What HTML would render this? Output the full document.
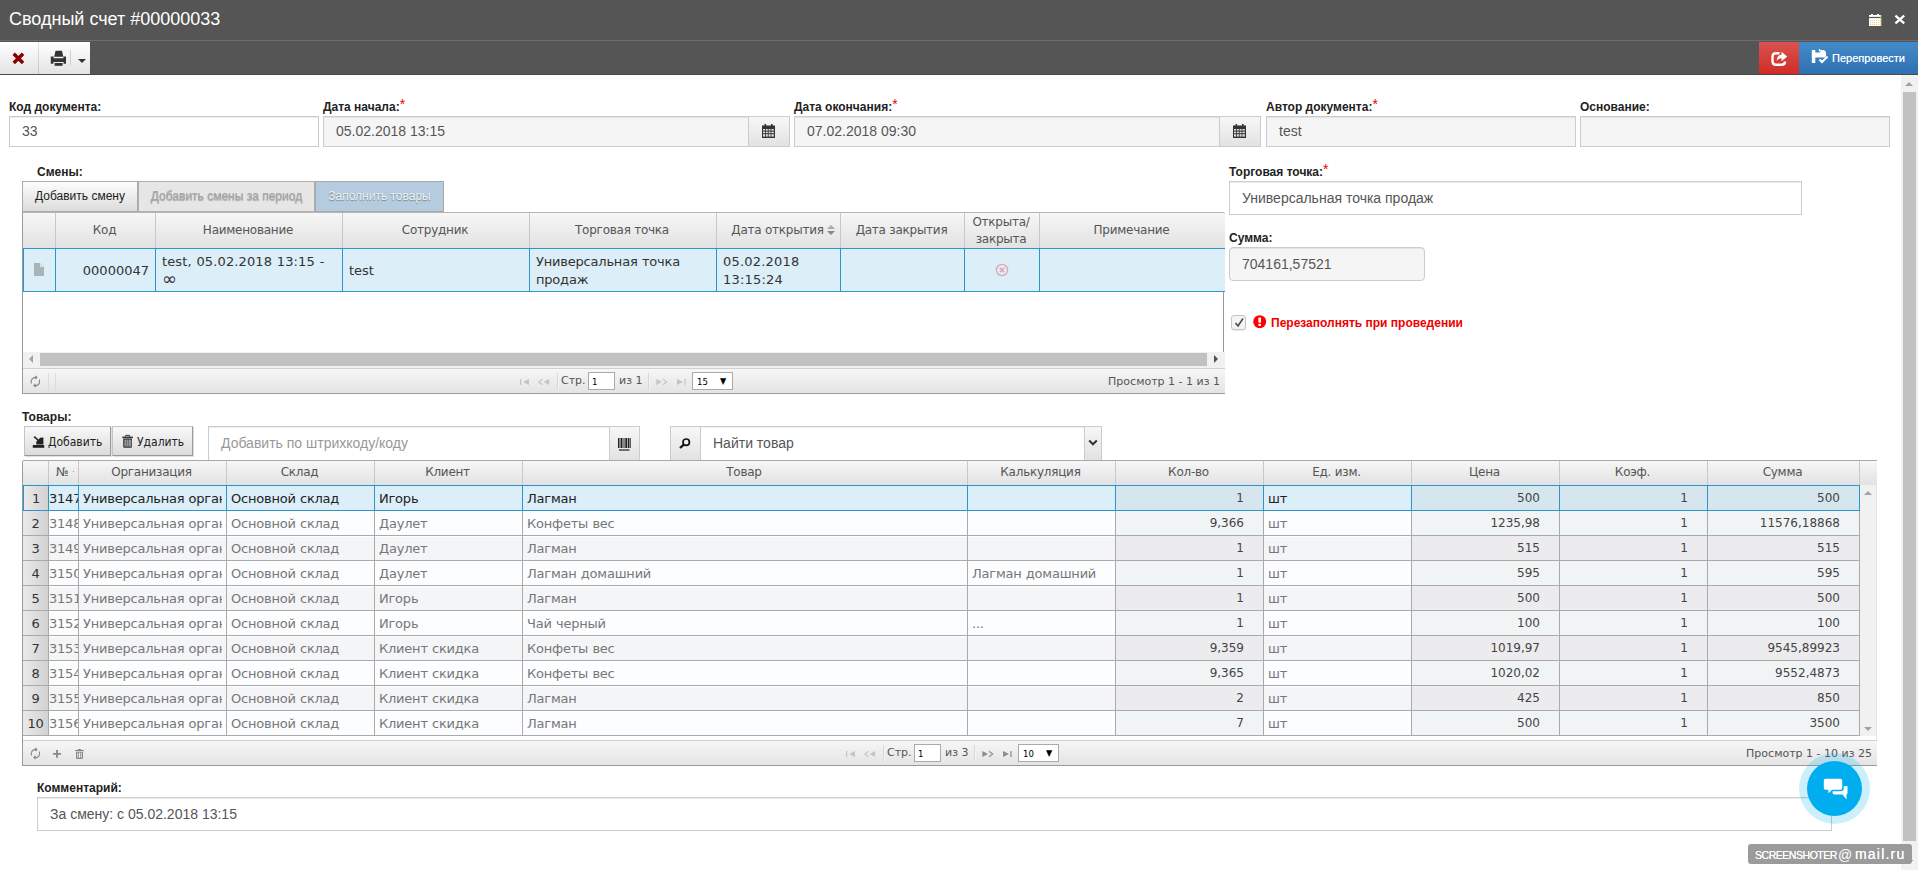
<!DOCTYPE html>
<html lang="ru">
<head>
<meta charset="utf-8">
<title>Сводный счет #00000033</title>
<style>
html,body{margin:0;padding:0;}
body{width:1918px;height:870px;overflow:hidden;background:#fff;position:relative;font-family:"Liberation Sans",Arial,sans-serif;font-size:12px;color:#222;}
.abs{position:absolute;box-sizing:border-box;}
#titlebar{left:0;top:0;width:1918px;height:40px;background:#555;}
#title{left:9px;top:8px;font-size:18px;line-height:22px;color:#fff;white-space:nowrap;}
#sep{left:0;top:40px;width:1918px;height:1px;background:#6b6b6b;}
#toolbar{left:0;top:41px;width:1918px;height:34px;background:#555;border-bottom:1px solid #4a4a4a;}
.tbtn{top:42px;height:32px;background:linear-gradient(#ffffff,#e3e3e3);}
.lbl{font-weight:bold;font-size:12px;line-height:14px;color:#222;white-space:nowrap;}
.req{color:#e00;font-weight:normal;font-size:14px;position:relative;top:-2.5px;line-height:0;}
.inp{border:1px solid #ccc;background:#fff;font-size:14px;color:#555;padding-left:12px;white-space:nowrap;overflow:hidden;box-shadow:inset 0 1px 1px rgba(0,0,0,.075);}
.inp.dis{background:#f5f5f5;}
.addon{border:1px solid #ccc;background:linear-gradient(#f7f7f7,#e2e2e2);}
.btn{border:1px solid #aaa;background:linear-gradient(#fdfdfd,#dcdcdc);font-size:12px;color:#222;text-align:center;white-space:nowrap;}
.ghdr{background:linear-gradient(#f7f7f7 0%,#ececec 50%,#e2e2e2 100%);border-top:1px solid #b5b5b5;}
.hc{font-family:"DejaVu Sans",Verdana,sans-serif;font-size:12px;letter-spacing:-0.25px;color:#555;text-align:center;padding-right:2px;white-space:nowrap;border-right:1px solid #c8c8c8;overflow:hidden;}
.pager{background:linear-gradient(#f6f6f6,#e4e4e4);border-top:1px solid #d0d0d0;border-bottom:1px solid #9a9a9a;}
.pg{font-family:"DejaVu Sans",Verdana,sans-serif;font-size:11px;color:#555;white-space:nowrap;line-height:14px;}
.pinp{border:1px solid #aaa;background:#fff;font-family:"DejaVu Sans Condensed","DejaVu Sans",sans-serif;font-stretch:condensed;font-size:9.5px;color:#000;line-height:17px;padding-left:3px;}
.c1{font-family:"DejaVu Sans",Verdana,sans-serif;font-size:13px;letter-spacing:0;word-spacing:0.4px;color:#333;border-right:1px solid #2b96cc;line-height:18px;overflow:hidden;}
.b3{font-family:"DejaVu Sans Condensed","DejaVu Sans",sans-serif;font-stretch:condensed;font-size:12px;line-height:30px;text-align:left;border-color:#c4c4c4 #999 #999 #c4c4c4;background:linear-gradient(#f8f8f8,#dcdcdc);box-shadow:1px 1px 0 rgba(0,0,0,.12);}
.tf{font-family:"DejaVu Sans Condensed","DejaVu Sans",sans-serif;font-stretch:condensed;}
.c2{font-family:"DejaVu Sans",Verdana,sans-serif;font-size:13px;letter-spacing:-0.22px;word-spacing:0.4px;color:#777;border-right:1px solid #aaa;line-height:26px;overflow:hidden;white-space:nowrap;height:24px;}
</style>
</head>
<body>
<div id="titlebar" class="abs"></div>
<div id="title" class="abs">Сводный счет #00000033</div>
<div id="sep" class="abs"></div>
<div id="toolbar" class="abs"></div>

<div class="abs tbtn" style="left:0;width:90px;"></div>
<div class="abs" style="left:38px;top:42px;width:1px;height:32px;background:linear-gradient(#e4e4e4,#c4c4c4);"></div>
<svg class="abs" style="left:10px;top:50px;" width="18" height="18" viewBox="10 50 18 18"><path d="M13.7 53.8 L23.1 63 M23.1 53.8 L13.7 63" stroke="#8b0000" stroke-width="3.5" fill="none"/></svg>
<svg class="abs" style="left:50px;top:50px;" width="17" height="17" viewBox="50 50 17 17"><g fill="#333">
<path d="M55.5 50.7 H62 L63.3 56.7 H54.2Z"/>
<path d="M50.8 56.4 H53.7 V58.2 H63.4 V56.4 H66 V63.7 H63.6 V62 H53.4 V63.7 H50.8Z"/>
<path d="M54.6 63 H62.6 V65.8 H54.6Z"/></g></svg>
<div class="abs" style="left:70px;top:50px;width:1px;height:15px;background:#cfcfcf;"></div>
<div class="abs" style="left:78px;top:59px;width:0;height:0;border-left:4px solid transparent;border-right:4px solid transparent;border-top:4px solid #333;"></div>

<svg class="abs" style="left:1866px;top:12px;" width="18" height="16" viewBox="1866 12 18 16">
<g fill="#fff"><rect x="1869" y="15" width="12.2" height="1.9"/><rect x="1871" y="14" width="2" height="1.2"/><rect x="1877" y="14" width="2" height="1.2"/><rect x="1869" y="18.1" width="12.2" height="7.9"/></g>
<g fill="#e9bf4f"><rect x="1870.2" y="20.1" width="0.9" height="0.9"/><rect x="1872.2" y="20.1" width="0.9" height="0.9"/><rect x="1874.2" y="20.1" width="0.9" height="0.9"/><rect x="1876.2" y="20.1" width="0.9" height="0.9"/><rect x="1878.2" y="20.1" width="0.9" height="0.9"/>
<rect x="1870.2" y="22.1" width="0.9" height="0.9"/><rect x="1872.2" y="22.1" width="0.9" height="0.9"/><rect x="1874.2" y="22.1" width="0.9" height="0.9"/><rect x="1876.2" y="22.1" width="0.9" height="0.9"/><rect x="1878.2" y="22.1" width="0.9" height="0.9"/>
<rect x="1870.2" y="24.1" width="0.9" height="0.9"/><rect x="1872.2" y="24.1" width="0.9" height="0.9"/><rect x="1874.2" y="24.1" width="0.9" height="0.9"/><rect x="1876.2" y="24.1" width="0.9" height="0.9"/><rect x="1878.2" y="24.1" width="0.9" height="0.9"/>
<rect x="1880.4" y="15" width="0.8" height="11" opacity="0.8"/></g>
</svg>
<svg class="abs" style="left:1892px;top:12px;" width="16" height="16" viewBox="1892 12 16 16"><path d="M1895.4 15.6 L1904.2 23.4 M1904.2 15.6 L1895.4 23.4" stroke="#fff" stroke-width="2.3" fill="none"/></svg>

<div class="abs" style="left:1759px;top:42px;width:40px;height:32px;background:linear-gradient(#d9534f,#d02c28);"></div>
<svg class="abs" style="left:1771px;top:51px;" width="17" height="16" viewBox="0 0 17 16">
<path d="M8.5 2.2 H5 Q1.5 2.2 1.5 5.7 V10.3 Q1.5 13.8 5 13.8 H10.5 Q14 13.8 14 10.5" stroke="#fff" stroke-width="2.4" fill="none"/>
<path d="M10.5 0.8 L16.2 5.5 L10.5 10.2 V7.3 Q7.5 7.3 5.8 9.8 Q6 4.2 10.5 3.7 Z" fill="#fff"/>
</svg>
<div class="abs" style="left:1799px;top:42px;width:119px;height:32px;background:linear-gradient(#428bca,#3071b0);"></div>
<svg class="abs" style="left:1811px;top:48px;" width="18" height="17" viewBox="0 0 18 17">
<path d="M0.8 2 H4.3 V4.5 H9.2 V2 H13 L15 4 V8 L13.5 9.5 H4.3 V15 H0.8 Z" fill="#fff"/>
<rect x="7.8" y="1" width="1.4" height="2.5" fill="#fff"/>
<path d="M8.5 11.5 L11 14 L16.5 8.5" stroke="#fff" stroke-width="2.2" fill="none"/>
</svg>
<div class="abs" style="left:1832px;top:51px;font-size:11px;line-height:14px;color:#fff;white-space:nowrap;text-shadow:0 0 0.5px rgba(255,255,255,.8);">Перепровести</div>

<div class="abs lbl" style="left:9px;top:100px;">Код документа:</div>
<div class="abs inp" style="left:9px;top:116px;width:310px;height:31px;line-height:29px;">33</div>
<div class="abs lbl" style="left:323px;top:100px;">Дата начала:<span class="req">*</span></div>
<div class="abs inp dis" style="left:323px;top:116px;width:426px;height:31px;line-height:29px;">05.02.2018 13:15</div>
<div class="abs addon" style="left:748px;top:116px;width:42px;height:31px;"></div>
<div class="abs lbl" style="left:794px;top:100px;">Дата окончания:<span class="req">*</span></div>
<div class="abs inp dis" style="left:794px;top:116px;width:426px;height:31px;line-height:29px;">07.02.2018 09:30</div>
<div class="abs addon" style="left:1219px;top:116px;width:42px;height:31px;"></div>
<div class="abs lbl" style="left:1266px;top:100px;">Автор документа:<span class="req">*</span></div>
<div class="abs inp dis" style="left:1266px;top:116px;width:310px;height:31px;line-height:29px;">test</div>
<div class="abs lbl" style="left:1580px;top:100px;">Основание:</div>
<div class="abs inp dis" style="left:1580px;top:116px;width:310px;height:31px;line-height:29px;"></div>
<svg class="abs" style="left:762px;top:124px;" width="13" height="14" viewBox="0 0 13 14">
<rect x="0" y="1.5" width="13" height="12.5" fill="#333"/><rect x="2.5" y="0" width="1.6" height="3" fill="#333"/><rect x="9" y="0" width="1.6" height="3" fill="#333"/>
<g fill="#ddd"><rect x="1" y="5" width="2" height="1.6"/><rect x="3.8" y="5" width="2" height="1.6"/><rect x="6.6" y="5" width="2" height="1.6"/><rect x="9.4" y="5" width="2.4" height="1.6"/>
<rect x="1" y="7.6" width="2" height="1.6"/><rect x="3.8" y="7.6" width="2" height="1.6"/><rect x="6.6" y="7.6" width="2" height="1.6"/><rect x="9.4" y="7.6" width="2.4" height="1.6"/>
<rect x="1" y="10.2" width="2" height="2.4"/><rect x="3.8" y="10.2" width="2" height="2.4"/><rect x="6.6" y="10.2" width="2" height="2.4"/><rect x="9.4" y="10.2" width="2.4" height="2.4"/></g>
</svg>
<svg class="abs" style="left:1233px;top:124px;" width="13" height="14" viewBox="0 0 13 14">
<rect x="0" y="1.5" width="13" height="12.5" fill="#333"/><rect x="2.5" y="0" width="1.6" height="3" fill="#333"/><rect x="9" y="0" width="1.6" height="3" fill="#333"/>
<g fill="#ddd"><rect x="1" y="5" width="2" height="1.6"/><rect x="3.8" y="5" width="2" height="1.6"/><rect x="6.6" y="5" width="2" height="1.6"/><rect x="9.4" y="5" width="2.4" height="1.6"/>
<rect x="1" y="7.6" width="2" height="1.6"/><rect x="3.8" y="7.6" width="2" height="1.6"/><rect x="6.6" y="7.6" width="2" height="1.6"/><rect x="9.4" y="7.6" width="2.4" height="1.6"/>
<rect x="1" y="10.2" width="2" height="2.4"/><rect x="3.8" y="10.2" width="2" height="2.4"/><rect x="6.6" y="10.2" width="2" height="2.4"/><rect x="9.4" y="10.2" width="2.4" height="2.4"/></g>
</svg>
<div class="abs lbl" style="left:37px;top:165px;">Смены:</div>
<div class="abs btn" style="left:22px;top:181px;width:116px;height:31px;line-height:29px;">Добавить смену</div>
<div class="abs btn" style="left:138px;top:181px;width:177px;height:31px;line-height:29px;background:#e6e6e6;color:#a6a6a6;border-color:#b0b0b0;text-shadow:0 1px 1px #a0a0a0;">Добавить смены за период</div>
<div class="abs btn" style="left:315px;top:181px;width:129px;height:31px;line-height:29px;background:#b5cbe0;color:#f0f1f2;border-color:#a8a8a8;text-shadow:0 1px 1px #75828f;">Заполнить товары</div>
<div class="abs" style="left:22px;top:212px;width:1px;height:182px;background:#9a9a9a;"></div>
<div class="abs" style="left:1223px;top:292px;width:1px;height:60px;background:#9a9a9a;"></div>
<div class="abs ghdr" style="left:23px;top:212px;width:1202px;height:36px;border-radius:0 2px 0 0;"></div>
<div class="abs hc" style="left:23px;top:213px;width:33px;height:35px;line-height:35px;"></div>
<div class="abs hc" style="left:56px;top:213px;width:100px;height:35px;line-height:35px;">Код</div>
<div class="abs hc" style="left:156px;top:213px;width:187px;height:35px;line-height:35px;">Наименование</div>
<div class="abs hc" style="left:343px;top:213px;width:187px;height:35px;line-height:35px;">Сотрудник</div>
<div class="abs hc" style="left:530px;top:213px;width:187px;height:35px;line-height:35px;">Торговая точка</div>
<div class="abs hc" style="left:717px;top:213px;width:124px;height:35px;line-height:35px;padding-right:2px;">Дата открытия</div>
<div class="abs hc" style="left:841px;top:213px;width:124px;height:35px;line-height:35px;">Дата закрытия</div>
<div class="abs hc" style="left:965px;top:213px;width:75px;height:35px;line-height:17px;padding-top:1px;">Открыта/<br>закрыта</div>
<div class="abs hc" style="left:1040px;top:213px;width:185px;height:35px;line-height:35px;border-right:none;">Примечание</div>
<div class="abs" style="left:827px;top:225px;width:0;height:0;border-left:4px solid transparent;border-right:4px solid transparent;border-bottom:4px solid #aaa;"></div>
<div class="abs" style="left:827px;top:231px;width:0;height:0;border-left:4px solid transparent;border-right:4px solid transparent;border-top:4px solid #888;"></div>
<div class="abs" style="left:23px;top:248px;width:1202px;height:44px;background:#dceef8;border-top:1px solid #2b96cc;border-bottom:1px solid #2b96cc;border-left:1px solid #2b96cc;"></div>
<div class="abs c1" style="left:23px;top:249px;width:33px;height:42px;"></div>
<div class="abs c1" style="left:56px;top:249px;width:100px;height:42px;"><div style="text-align:right;padding-right:6px;line-height:44px;">00000047</div></div>
<div class="abs c1" style="left:156px;top:249px;width:187px;height:42px;"><div style="padding:4px 6px 0;letter-spacing:0.12px;word-spacing:0.5px;">test, 05.02.2018 13:15 -<br><span style="font-size:18px;line-height:14px;position:relative;top:1px;">∞</span></div></div>
<div class="abs c1" style="left:343px;top:249px;width:187px;height:42px;"><div style="padding-left:6px;line-height:44px;">test</div></div>
<div class="abs c1" style="left:530px;top:249px;width:187px;height:42px;"><div style="padding:4px 6px 0;letter-spacing:-0.2px;">Универсальная точка<br>продаж</div></div>
<div class="abs c1" style="left:717px;top:249px;width:124px;height:42px;"><div style="padding:4px 6px 0;letter-spacing:0.2px;">05.02.2018<br>13:15:24</div></div>
<div class="abs c1" style="left:841px;top:249px;width:124px;height:42px;"></div>
<div class="abs c1" style="left:965px;top:249px;width:75px;height:42px;"></div>
<div class="abs c1" style="left:1040px;top:249px;width:185px;height:42px;border-right:none;"></div>
<svg class="abs" style="left:34px;top:263px;" width="10" height="13" viewBox="0 0 10 13"><path d="M0 0 H6 L10 4 V13 H0Z" fill="#a9b4b8"/><path d="M6 0 V4 H10Z" fill="#d6e2e8"/></svg>
<svg class="abs" style="left:995px;top:263px;" width="14" height="14" viewBox="0 0 14 14"><circle cx="7" cy="7" r="5.6" fill="none" stroke="#e0a3ab" stroke-width="1.3"/><path d="M4.8 4.8 L9.2 9.2 M9.2 4.8 L4.8 9.2" stroke="#e0a3ab" stroke-width="1.5"/></svg>
<div class="abs" style="left:23px;top:352px;width:1202px;height:16px;background:#f1f1f1;"></div>
<div class="abs" style="left:40px;top:353px;width:1167px;height:13px;background:#c1c1c1;"></div>
<div class="abs" style="left:29px;top:355px;width:0;height:0;border-top:4px solid transparent;border-bottom:4px solid transparent;border-right:4px solid #a3a3a3;"></div>
<div class="abs" style="left:1214px;top:355px;width:0;height:0;border-top:4px solid transparent;border-bottom:4px solid transparent;border-left:4px solid #505050;"></div>
<div class="abs pager" style="left:23px;top:368px;width:1202px;height:26px;"></div>
<svg class="abs" style="left:30px;top:375px;" width="12" height="13" viewBox="0 0 12 13"><g fill="none" stroke="#888" stroke-width="1.1"><path d="M1.6 8.6 A4.3 4.3 0 0 1 4.2 2.6 H6.6"/><path d="M5.2 1 L6.9 2.6 L5.2 4.2"/><path d="M9.2 4.6 A4.3 4.3 0 0 1 6.6 10.6 H4.2"/><path d="M5.6 9 L3.9 10.6 L5.6 12.2"/></g></svg>
<svg class="abs" style="left:520px;top:378px;" width="30" height="8" viewBox="0 0 30 8"><rect x="0" y="1" width="1.2" height="6" fill="#c4c4c4"/><path d="M9 1 V7 L3 4Z" fill="#c4c4c4"/><path d="M22.5 1.2 L18.8 4 L22.5 6.8" fill="none" stroke="#c4c4c4" stroke-width="1.1"/><path d="M29.2 1 V7 L23.6 4Z" fill="#c4c4c4"/></svg>
<div class="abs" style="left:557px;top:373px;width:2px;height:17px;background:#d8d8d8;border-right:1px solid #f4f4f4;"></div>
<div class="abs pg" style="left:561px;top:374px;">Стр.</div>
<div class="abs pinp" style="left:588px;top:372px;width:27px;height:18px;">1</div>
<div class="abs pg" style="left:619px;top:374px;">из 1</div>
<div class="abs" style="left:648px;top:373px;width:2px;height:17px;background:#d8d8d8;border-right:1px solid #f4f4f4;"></div>
<svg class="abs" style="left:656px;top:378px;" width="31" height="8" viewBox="0 0 31 8"><path d="M0.4 1 V7 L6 4Z" fill="#c4c4c4"/><path d="M7 1.2 L10.7 4 L7 6.8" fill="none" stroke="#c4c4c4" stroke-width="1.1"/><path d="M21 1 V7 L27 4Z" fill="#c4c4c4"/><rect x="28.4" y="1" width="1.2" height="6" fill="#c4c4c4"/></svg>
<div class="abs pinp" style="left:692px;top:372px;width:41px;height:18px;padding-left:4px;">15<span style="position:absolute;left:27px;top:0;font-size:9px;">▼</span></div>
<div class="abs pg" style="left:23px;top:375px;width:1197px;text-align:right;">Просмотр 1 - 1 из 1</div>
<div class="abs" style="left:48px;top:373px;width:1px;height:18px;background:#dcdcdc;"></div><div class="abs" style="left:55px;top:373px;width:1px;height:18px;background:#dcdcdc;"></div>
<div class="abs lbl" style="left:1229px;top:165px;">Торговая точка:<span class="req">*</span></div>
<div class="abs inp" style="left:1229px;top:181px;width:573px;height:34px;line-height:32px;">Универсальная точка продаж</div>
<div class="abs lbl" style="left:1229px;top:231px;">Сумма:</div>
<div class="abs inp dis" style="left:1229px;top:247px;width:196px;height:34px;line-height:32px;border-radius:4px;">704161,57521</div>
<div class="abs" style="left:1231px;top:315px;width:15px;height:15px;border:1px solid #c4c4c4;border-radius:3px;background:#f4f4f4;box-shadow:0 1px 1px rgba(0,0,0,.08);"></div>
<svg class="abs" style="left:1234px;top:317px;" width="11" height="11" viewBox="0 0 11 11"><path d="M1.5 6 L4 9 L9 1.5" fill="none" stroke="#444" stroke-width="1.5"/></svg>
<svg class="abs" style="left:1253px;top:315px;" width="14" height="14" viewBox="0 0 14 14"><circle cx="6.7" cy="6.7" r="6.5" fill="#f00"/><rect x="5.4" y="2.6" width="2.6" height="5.2" rx="0.6" fill="#fff"/><rect x="5.5" y="8.8" width="2.4" height="2.2" rx="0.5" fill="#fff"/></svg>
<div class="abs lbl" style="left:1271px;top:316px;color:#f00000;">Перезаполнять при проведении</div>
<div class="abs lbl" style="left:22px;top:410px;">Товары:</div>
<div class="abs btn b3" style="left:24px;top:426px;width:87px;height:30px;padding-left:23px;">Добавить</div>
<div class="abs btn b3" style="left:112px;top:426px;width:81px;height:30px;padding-left:24px;">Удалить</div>
<svg class="abs" style="left:32px;top:435px;" width="13" height="14" viewBox="32 435 13 14"><rect x="32.8" y="445" width="11.4" height="2.8" fill="#222"/><path d="M33.6 437.2 L34.8 436 L38.4 439.6 L40.2 437.8 L43.4 437.6 V444.6 H36.2 L36.4 441.6 L37.4 440.6Z" fill="#222"/></svg>
<svg class="abs" style="left:122px;top:434px;" width="12" height="15" viewBox="122 434 12 15"><path d="M125.6 436.6 V435.4 H129.6 V436.6" fill="none" stroke="#333" stroke-width="1"/><rect x="122.3" y="436.6" width="10.6" height="1.5" fill="#333"/><path d="M123.2 438.6 H132 V446.8 Q132 447.8 131 447.8 H124.2 Q123.2 447.8 123.2 446.8Z" fill="#333"/><g fill="#d4d4d4"><rect x="124.6" y="439.6" width="1" height="7"/><rect x="126.6" y="439.6" width="1" height="7"/><rect x="128.6" y="439.6" width="1" height="7"/><rect x="130.4" y="439.6" width="0.8" height="7"/></g></svg>
<div class="abs inp" style="left:208px;top:426px;width:402px;height:35px;line-height:33px;color:#999;font-family:"DejaVu Sans Condensed","DejaVu Sans",sans-serif;font-stretch:condensed;">Добавить по штрихкоду/коду</div>
<div class="abs addon" style="left:609px;top:426px;width:31px;height:35px;"></div>
<svg class="abs" style="left:618px;top:438px;" width="13" height="13" viewBox="0 0 13 13"><g fill="#222"><rect x="0" y="0" width="1.5" height="10"/><rect x="2.5" y="0" width="2" height="10"/><rect x="5.5" y="0" width="1" height="10"/><rect x="7.3" y="0" width="2" height="10"/><rect x="10" y="0" width="1" height="10"/><rect x="11.5" y="0" width="1.2" height="10"/><rect x="1" y="11.4" width="10.5" height="1.2"/></g></svg>
<div class="abs addon" style="left:670px;top:426px;width:31px;height:35px;"></div>
<svg class="abs" style="left:679px;top:438px;" width="12" height="11" viewBox="0 0 12 11"><circle cx="7.2" cy="4.2" r="3.2" fill="none" stroke="#111" stroke-width="1.7"/><path d="M4.8 6.6 L1 10" stroke="#111" stroke-width="2.2"/></svg>
<div class="abs inp" style="left:700px;top:426px;width:385px;height:35px;line-height:33px;font-family:"DejaVu Sans Condensed","DejaVu Sans",sans-serif;font-stretch:condensed;">Найти товар</div>
<div class="abs addon" style="left:1084px;top:426px;width:18px;height:35px;"></div>
<svg class="abs" style="left:1088px;top:439px;" width="10" height="8" viewBox="0 0 10 8"><path d="M1.2 1.5 L5 5.3 L8.8 1.5" fill="none" stroke="#333" stroke-width="2"/></svg>
<div class="abs ghdr" style="left:23px;top:460px;width:1854px;height:25px;border-top-color:#a8a8a8;"></div>
<div class="abs" style="left:22px;top:461px;width:1px;height:305px;background:#9a9a9a;"></div>
<div class="abs" style="left:1876px;top:485px;width:1px;height:255px;background:#e4e4e4;"></div>
<div class="abs hc" style="left:24px;top:461px;width:25px;height:24px;line-height:23px;"></div>
<div class="abs hc" style="left:49px;top:461px;width:30px;height:24px;line-height:23px;padding-right:3px;">№</div>
<div class="abs hc" style="left:79px;top:461px;width:148px;height:24px;line-height:23px;">Организация</div>
<div class="abs hc" style="left:227px;top:461px;width:148px;height:24px;line-height:23px;">Склад</div>
<div class="abs hc" style="left:375px;top:461px;width:148px;height:24px;line-height:23px;">Клиент</div>
<div class="abs hc" style="left:523px;top:461px;width:445px;height:24px;line-height:23px;">Товар</div>
<div class="abs hc" style="left:968px;top:461px;width:148px;height:24px;line-height:23px;">Калькуляция</div>
<div class="abs hc" style="left:1116px;top:461px;width:148px;height:24px;line-height:23px;">Кол-во</div>
<div class="abs hc" style="left:1264px;top:461px;width:148px;height:24px;line-height:23px;">Ед. изм.</div>
<div class="abs hc" style="left:1412px;top:461px;width:148px;height:24px;line-height:23px;">Цена</div>
<div class="abs hc" style="left:1560px;top:461px;width:148px;height:24px;line-height:23px;">Коэф.</div>
<div class="abs hc" style="left:1708px;top:461px;width:152px;height:24px;line-height:23px;">Сумма</div>
<div class="abs" style="left:73px;top:471px;width:1px;height:1px;background:#999;"></div>
<div class="abs" style="left:23px;top:485px;width:1837px;height:26px;background:#dceef8;border-top:1px solid #2b96cc;border-bottom:1px solid #2b96cc;"></div>
<div class="abs c2" style="left:24px;top:486px;width:25px;border-right-color:#2b96cc;color:#222;background:linear-gradient(90deg,#eaeaea,#d2d2d2);color:#333;text-align:center;border-left:1px solid #2b96cc;left:23px;width:26px;">1</div>
<div class="abs c2" style="left:49px;top:486px;width:30px;border-right-color:#2b96cc;color:#222;padding-left:0px;">3147</div>
<div class="abs c2" style="left:79px;top:486px;width:148px;border-right-color:#2b96cc;color:#222;padding-left:4px;padding-right:4px;"><div style="overflow:hidden;height:24px;">Универсальная организация</div></div>
<div class="abs c2" style="left:227px;top:486px;width:148px;border-right-color:#2b96cc;color:#222;padding-left:4px;padding-right:4px;"><div style="overflow:hidden;height:24px;">Основной склад</div></div>
<div class="abs c2" style="left:375px;top:486px;width:148px;border-right-color:#2b96cc;color:#222;padding-left:4px;padding-right:4px;"><div style="overflow:hidden;height:24px;">Игорь</div></div>
<div class="abs c2" style="left:523px;top:486px;width:445px;border-right-color:#2b96cc;color:#222;padding-left:4px;padding-right:4px;"><div style="overflow:hidden;height:24px;">Лагман</div></div>
<div class="abs c2" style="left:968px;top:486px;width:148px;border-right-color:#2b96cc;color:#222;padding-left:4px;padding-right:4px;"><div style="overflow:hidden;height:24px;"></div></div>
<div class="abs c2" style="left:1116px;top:486px;width:148px;border-right-color:#2b96cc;color:#222;background:#d6e6ee;color:#444;text-align:right;padding-right:19px;line-height:25px;font-size:12px;letter-spacing:0;">1</div>
<div class="abs c2" style="left:1264px;top:486px;width:148px;border-right-color:#2b96cc;color:#222;padding-left:4px;padding-right:4px;"><div style="overflow:hidden;height:24px;">шт</div></div>
<div class="abs c2" style="left:1412px;top:486px;width:148px;border-right-color:#2b96cc;color:#222;background:#d6e6ee;color:#444;text-align:right;padding-right:19px;line-height:25px;font-size:12px;letter-spacing:0;">500</div>
<div class="abs c2" style="left:1560px;top:486px;width:148px;border-right-color:#2b96cc;color:#222;background:#d6e6ee;color:#444;text-align:right;padding-right:19px;line-height:25px;font-size:12px;letter-spacing:0;">1</div>
<div class="abs c2" style="left:1708px;top:486px;width:152px;border-right-color:#2b96cc;color:#222;background:#d6e6ee;color:#444;text-align:right;padding-right:19px;line-height:25px;font-size:12px;letter-spacing:0;">500</div>
<div class="abs" style="left:23px;top:511px;width:1837px;height:25px;background:#fbfdfe;border-bottom:1px solid #aaa;border-top:1px solid #fff;"></div>
<div class="abs c2" style="left:24px;top:511px;width:25px;border-right-color:#aaa;background:linear-gradient(90deg,#eaeaea,#d2d2d2);color:#333;text-align:center;left:23px;width:26px;">2</div>
<div class="abs c2" style="left:49px;top:511px;width:30px;border-right-color:#aaa;padding-left:0px;">3148</div>
<div class="abs c2" style="left:79px;top:511px;width:148px;border-right-color:#aaa;padding-left:4px;padding-right:4px;"><div style="overflow:hidden;height:24px;">Универсальная организация</div></div>
<div class="abs c2" style="left:227px;top:511px;width:148px;border-right-color:#aaa;padding-left:4px;padding-right:4px;"><div style="overflow:hidden;height:24px;">Основной склад</div></div>
<div class="abs c2" style="left:375px;top:511px;width:148px;border-right-color:#aaa;padding-left:4px;padding-right:4px;"><div style="overflow:hidden;height:24px;">Даулет</div></div>
<div class="abs c2" style="left:523px;top:511px;width:445px;border-right-color:#aaa;padding-left:4px;padding-right:4px;"><div style="overflow:hidden;height:24px;">Конфеты вес</div></div>
<div class="abs c2" style="left:968px;top:511px;width:148px;border-right-color:#aaa;padding-left:4px;padding-right:4px;"><div style="overflow:hidden;height:24px;"></div></div>
<div class="abs c2" style="left:1116px;top:511px;width:148px;border-right-color:#aaa;background:#f1f4f5;color:#444;text-align:right;padding-right:19px;line-height:25px;font-size:12px;letter-spacing:0;">9,366</div>
<div class="abs c2" style="left:1264px;top:511px;width:148px;border-right-color:#aaa;padding-left:4px;padding-right:4px;"><div style="overflow:hidden;height:24px;">шт</div></div>
<div class="abs c2" style="left:1412px;top:511px;width:148px;border-right-color:#aaa;background:#f1f4f5;color:#444;text-align:right;padding-right:19px;line-height:25px;font-size:12px;letter-spacing:0;">1235,98</div>
<div class="abs c2" style="left:1560px;top:511px;width:148px;border-right-color:#aaa;background:#f1f4f5;color:#444;text-align:right;padding-right:19px;line-height:25px;font-size:12px;letter-spacing:0;">1</div>
<div class="abs c2" style="left:1708px;top:511px;width:152px;border-right-color:#aaa;background:#f1f4f5;color:#444;text-align:right;padding-right:19px;line-height:25px;font-size:12px;letter-spacing:0;">11576,18868</div>
<div class="abs" style="left:23px;top:536px;width:1837px;height:25px;background:#f4f5f7;border-bottom:1px solid #aaa;border-top:1px solid #fff;"></div>
<div class="abs c2" style="left:24px;top:536px;width:25px;border-right-color:#aaa;background:linear-gradient(90deg,#eaeaea,#d2d2d2);color:#333;text-align:center;left:23px;width:26px;">3</div>
<div class="abs c2" style="left:49px;top:536px;width:30px;border-right-color:#aaa;padding-left:0px;">3149</div>
<div class="abs c2" style="left:79px;top:536px;width:148px;border-right-color:#aaa;padding-left:4px;padding-right:4px;"><div style="overflow:hidden;height:24px;">Универсальная организация</div></div>
<div class="abs c2" style="left:227px;top:536px;width:148px;border-right-color:#aaa;padding-left:4px;padding-right:4px;"><div style="overflow:hidden;height:24px;">Основной склад</div></div>
<div class="abs c2" style="left:375px;top:536px;width:148px;border-right-color:#aaa;padding-left:4px;padding-right:4px;"><div style="overflow:hidden;height:24px;">Даулет</div></div>
<div class="abs c2" style="left:523px;top:536px;width:445px;border-right-color:#aaa;padding-left:4px;padding-right:4px;"><div style="overflow:hidden;height:24px;">Лагман</div></div>
<div class="abs c2" style="left:968px;top:536px;width:148px;border-right-color:#aaa;padding-left:4px;padding-right:4px;"><div style="overflow:hidden;height:24px;"></div></div>
<div class="abs c2" style="left:1116px;top:536px;width:148px;border-right-color:#aaa;background:#ececee;color:#444;text-align:right;padding-right:19px;line-height:25px;font-size:12px;letter-spacing:0;">1</div>
<div class="abs c2" style="left:1264px;top:536px;width:148px;border-right-color:#aaa;padding-left:4px;padding-right:4px;"><div style="overflow:hidden;height:24px;">шт</div></div>
<div class="abs c2" style="left:1412px;top:536px;width:148px;border-right-color:#aaa;background:#ececee;color:#444;text-align:right;padding-right:19px;line-height:25px;font-size:12px;letter-spacing:0;">515</div>
<div class="abs c2" style="left:1560px;top:536px;width:148px;border-right-color:#aaa;background:#ececee;color:#444;text-align:right;padding-right:19px;line-height:25px;font-size:12px;letter-spacing:0;">1</div>
<div class="abs c2" style="left:1708px;top:536px;width:152px;border-right-color:#aaa;background:#ececee;color:#444;text-align:right;padding-right:19px;line-height:25px;font-size:12px;letter-spacing:0;">515</div>
<div class="abs" style="left:23px;top:561px;width:1837px;height:25px;background:#fbfdfe;border-bottom:1px solid #aaa;border-top:1px solid #fff;"></div>
<div class="abs c2" style="left:24px;top:561px;width:25px;border-right-color:#aaa;background:linear-gradient(90deg,#eaeaea,#d2d2d2);color:#333;text-align:center;left:23px;width:26px;">4</div>
<div class="abs c2" style="left:49px;top:561px;width:30px;border-right-color:#aaa;padding-left:0px;">3150</div>
<div class="abs c2" style="left:79px;top:561px;width:148px;border-right-color:#aaa;padding-left:4px;padding-right:4px;"><div style="overflow:hidden;height:24px;">Универсальная организация</div></div>
<div class="abs c2" style="left:227px;top:561px;width:148px;border-right-color:#aaa;padding-left:4px;padding-right:4px;"><div style="overflow:hidden;height:24px;">Основной склад</div></div>
<div class="abs c2" style="left:375px;top:561px;width:148px;border-right-color:#aaa;padding-left:4px;padding-right:4px;"><div style="overflow:hidden;height:24px;">Даулет</div></div>
<div class="abs c2" style="left:523px;top:561px;width:445px;border-right-color:#aaa;padding-left:4px;padding-right:4px;"><div style="overflow:hidden;height:24px;">Лагман домашний</div></div>
<div class="abs c2" style="left:968px;top:561px;width:148px;border-right-color:#aaa;padding-left:4px;padding-right:4px;"><div style="overflow:hidden;height:24px;">Лагман домашний</div></div>
<div class="abs c2" style="left:1116px;top:561px;width:148px;border-right-color:#aaa;background:#f1f4f5;color:#444;text-align:right;padding-right:19px;line-height:25px;font-size:12px;letter-spacing:0;">1</div>
<div class="abs c2" style="left:1264px;top:561px;width:148px;border-right-color:#aaa;padding-left:4px;padding-right:4px;"><div style="overflow:hidden;height:24px;">шт</div></div>
<div class="abs c2" style="left:1412px;top:561px;width:148px;border-right-color:#aaa;background:#f1f4f5;color:#444;text-align:right;padding-right:19px;line-height:25px;font-size:12px;letter-spacing:0;">595</div>
<div class="abs c2" style="left:1560px;top:561px;width:148px;border-right-color:#aaa;background:#f1f4f5;color:#444;text-align:right;padding-right:19px;line-height:25px;font-size:12px;letter-spacing:0;">1</div>
<div class="abs c2" style="left:1708px;top:561px;width:152px;border-right-color:#aaa;background:#f1f4f5;color:#444;text-align:right;padding-right:19px;line-height:25px;font-size:12px;letter-spacing:0;">595</div>
<div class="abs" style="left:23px;top:586px;width:1837px;height:25px;background:#f4f5f7;border-bottom:1px solid #aaa;border-top:1px solid #fff;"></div>
<div class="abs c2" style="left:24px;top:586px;width:25px;border-right-color:#aaa;background:linear-gradient(90deg,#eaeaea,#d2d2d2);color:#333;text-align:center;left:23px;width:26px;">5</div>
<div class="abs c2" style="left:49px;top:586px;width:30px;border-right-color:#aaa;padding-left:0px;">3151</div>
<div class="abs c2" style="left:79px;top:586px;width:148px;border-right-color:#aaa;padding-left:4px;padding-right:4px;"><div style="overflow:hidden;height:24px;">Универсальная организация</div></div>
<div class="abs c2" style="left:227px;top:586px;width:148px;border-right-color:#aaa;padding-left:4px;padding-right:4px;"><div style="overflow:hidden;height:24px;">Основной склад</div></div>
<div class="abs c2" style="left:375px;top:586px;width:148px;border-right-color:#aaa;padding-left:4px;padding-right:4px;"><div style="overflow:hidden;height:24px;">Игорь</div></div>
<div class="abs c2" style="left:523px;top:586px;width:445px;border-right-color:#aaa;padding-left:4px;padding-right:4px;"><div style="overflow:hidden;height:24px;">Лагман</div></div>
<div class="abs c2" style="left:968px;top:586px;width:148px;border-right-color:#aaa;padding-left:4px;padding-right:4px;"><div style="overflow:hidden;height:24px;"></div></div>
<div class="abs c2" style="left:1116px;top:586px;width:148px;border-right-color:#aaa;background:#ececee;color:#444;text-align:right;padding-right:19px;line-height:25px;font-size:12px;letter-spacing:0;">1</div>
<div class="abs c2" style="left:1264px;top:586px;width:148px;border-right-color:#aaa;padding-left:4px;padding-right:4px;"><div style="overflow:hidden;height:24px;">шт</div></div>
<div class="abs c2" style="left:1412px;top:586px;width:148px;border-right-color:#aaa;background:#ececee;color:#444;text-align:right;padding-right:19px;line-height:25px;font-size:12px;letter-spacing:0;">500</div>
<div class="abs c2" style="left:1560px;top:586px;width:148px;border-right-color:#aaa;background:#ececee;color:#444;text-align:right;padding-right:19px;line-height:25px;font-size:12px;letter-spacing:0;">1</div>
<div class="abs c2" style="left:1708px;top:586px;width:152px;border-right-color:#aaa;background:#ececee;color:#444;text-align:right;padding-right:19px;line-height:25px;font-size:12px;letter-spacing:0;">500</div>
<div class="abs" style="left:23px;top:611px;width:1837px;height:25px;background:#fbfdfe;border-bottom:1px solid #aaa;border-top:1px solid #fff;"></div>
<div class="abs c2" style="left:24px;top:611px;width:25px;border-right-color:#aaa;background:linear-gradient(90deg,#eaeaea,#d2d2d2);color:#333;text-align:center;left:23px;width:26px;">6</div>
<div class="abs c2" style="left:49px;top:611px;width:30px;border-right-color:#aaa;padding-left:0px;">3152</div>
<div class="abs c2" style="left:79px;top:611px;width:148px;border-right-color:#aaa;padding-left:4px;padding-right:4px;"><div style="overflow:hidden;height:24px;">Универсальная организация</div></div>
<div class="abs c2" style="left:227px;top:611px;width:148px;border-right-color:#aaa;padding-left:4px;padding-right:4px;"><div style="overflow:hidden;height:24px;">Основной склад</div></div>
<div class="abs c2" style="left:375px;top:611px;width:148px;border-right-color:#aaa;padding-left:4px;padding-right:4px;"><div style="overflow:hidden;height:24px;">Игорь</div></div>
<div class="abs c2" style="left:523px;top:611px;width:445px;border-right-color:#aaa;padding-left:4px;padding-right:4px;"><div style="overflow:hidden;height:24px;">Чай черный</div></div>
<div class="abs c2" style="left:968px;top:611px;width:148px;border-right-color:#aaa;padding-left:4px;padding-right:4px;"><div style="overflow:hidden;height:24px;">...</div></div>
<div class="abs c2" style="left:1116px;top:611px;width:148px;border-right-color:#aaa;background:#f1f4f5;color:#444;text-align:right;padding-right:19px;line-height:25px;font-size:12px;letter-spacing:0;">1</div>
<div class="abs c2" style="left:1264px;top:611px;width:148px;border-right-color:#aaa;padding-left:4px;padding-right:4px;"><div style="overflow:hidden;height:24px;">шт</div></div>
<div class="abs c2" style="left:1412px;top:611px;width:148px;border-right-color:#aaa;background:#f1f4f5;color:#444;text-align:right;padding-right:19px;line-height:25px;font-size:12px;letter-spacing:0;">100</div>
<div class="abs c2" style="left:1560px;top:611px;width:148px;border-right-color:#aaa;background:#f1f4f5;color:#444;text-align:right;padding-right:19px;line-height:25px;font-size:12px;letter-spacing:0;">1</div>
<div class="abs c2" style="left:1708px;top:611px;width:152px;border-right-color:#aaa;background:#f1f4f5;color:#444;text-align:right;padding-right:19px;line-height:25px;font-size:12px;letter-spacing:0;">100</div>
<div class="abs" style="left:23px;top:636px;width:1837px;height:25px;background:#f4f5f7;border-bottom:1px solid #aaa;border-top:1px solid #fff;"></div>
<div class="abs c2" style="left:24px;top:636px;width:25px;border-right-color:#aaa;background:linear-gradient(90deg,#eaeaea,#d2d2d2);color:#333;text-align:center;left:23px;width:26px;">7</div>
<div class="abs c2" style="left:49px;top:636px;width:30px;border-right-color:#aaa;padding-left:0px;">3153</div>
<div class="abs c2" style="left:79px;top:636px;width:148px;border-right-color:#aaa;padding-left:4px;padding-right:4px;"><div style="overflow:hidden;height:24px;">Универсальная организация</div></div>
<div class="abs c2" style="left:227px;top:636px;width:148px;border-right-color:#aaa;padding-left:4px;padding-right:4px;"><div style="overflow:hidden;height:24px;">Основной склад</div></div>
<div class="abs c2" style="left:375px;top:636px;width:148px;border-right-color:#aaa;padding-left:4px;padding-right:4px;"><div style="overflow:hidden;height:24px;">Клиент скидка</div></div>
<div class="abs c2" style="left:523px;top:636px;width:445px;border-right-color:#aaa;padding-left:4px;padding-right:4px;"><div style="overflow:hidden;height:24px;">Конфеты вес</div></div>
<div class="abs c2" style="left:968px;top:636px;width:148px;border-right-color:#aaa;padding-left:4px;padding-right:4px;"><div style="overflow:hidden;height:24px;"></div></div>
<div class="abs c2" style="left:1116px;top:636px;width:148px;border-right-color:#aaa;background:#ececee;color:#444;text-align:right;padding-right:19px;line-height:25px;font-size:12px;letter-spacing:0;">9,359</div>
<div class="abs c2" style="left:1264px;top:636px;width:148px;border-right-color:#aaa;padding-left:4px;padding-right:4px;"><div style="overflow:hidden;height:24px;">шт</div></div>
<div class="abs c2" style="left:1412px;top:636px;width:148px;border-right-color:#aaa;background:#ececee;color:#444;text-align:right;padding-right:19px;line-height:25px;font-size:12px;letter-spacing:0;">1019,97</div>
<div class="abs c2" style="left:1560px;top:636px;width:148px;border-right-color:#aaa;background:#ececee;color:#444;text-align:right;padding-right:19px;line-height:25px;font-size:12px;letter-spacing:0;">1</div>
<div class="abs c2" style="left:1708px;top:636px;width:152px;border-right-color:#aaa;background:#ececee;color:#444;text-align:right;padding-right:19px;line-height:25px;font-size:12px;letter-spacing:0;">9545,89923</div>
<div class="abs" style="left:23px;top:661px;width:1837px;height:25px;background:#fbfdfe;border-bottom:1px solid #aaa;border-top:1px solid #fff;"></div>
<div class="abs c2" style="left:24px;top:661px;width:25px;border-right-color:#aaa;background:linear-gradient(90deg,#eaeaea,#d2d2d2);color:#333;text-align:center;left:23px;width:26px;">8</div>
<div class="abs c2" style="left:49px;top:661px;width:30px;border-right-color:#aaa;padding-left:0px;">3154</div>
<div class="abs c2" style="left:79px;top:661px;width:148px;border-right-color:#aaa;padding-left:4px;padding-right:4px;"><div style="overflow:hidden;height:24px;">Универсальная организация</div></div>
<div class="abs c2" style="left:227px;top:661px;width:148px;border-right-color:#aaa;padding-left:4px;padding-right:4px;"><div style="overflow:hidden;height:24px;">Основной склад</div></div>
<div class="abs c2" style="left:375px;top:661px;width:148px;border-right-color:#aaa;padding-left:4px;padding-right:4px;"><div style="overflow:hidden;height:24px;">Клиент скидка</div></div>
<div class="abs c2" style="left:523px;top:661px;width:445px;border-right-color:#aaa;padding-left:4px;padding-right:4px;"><div style="overflow:hidden;height:24px;">Конфеты вес</div></div>
<div class="abs c2" style="left:968px;top:661px;width:148px;border-right-color:#aaa;padding-left:4px;padding-right:4px;"><div style="overflow:hidden;height:24px;"></div></div>
<div class="abs c2" style="left:1116px;top:661px;width:148px;border-right-color:#aaa;background:#f1f4f5;color:#444;text-align:right;padding-right:19px;line-height:25px;font-size:12px;letter-spacing:0;">9,365</div>
<div class="abs c2" style="left:1264px;top:661px;width:148px;border-right-color:#aaa;padding-left:4px;padding-right:4px;"><div style="overflow:hidden;height:24px;">шт</div></div>
<div class="abs c2" style="left:1412px;top:661px;width:148px;border-right-color:#aaa;background:#f1f4f5;color:#444;text-align:right;padding-right:19px;line-height:25px;font-size:12px;letter-spacing:0;">1020,02</div>
<div class="abs c2" style="left:1560px;top:661px;width:148px;border-right-color:#aaa;background:#f1f4f5;color:#444;text-align:right;padding-right:19px;line-height:25px;font-size:12px;letter-spacing:0;">1</div>
<div class="abs c2" style="left:1708px;top:661px;width:152px;border-right-color:#aaa;background:#f1f4f5;color:#444;text-align:right;padding-right:19px;line-height:25px;font-size:12px;letter-spacing:0;">9552,4873</div>
<div class="abs" style="left:23px;top:686px;width:1837px;height:25px;background:#f4f5f7;border-bottom:1px solid #aaa;border-top:1px solid #fff;"></div>
<div class="abs c2" style="left:24px;top:686px;width:25px;border-right-color:#aaa;background:linear-gradient(90deg,#eaeaea,#d2d2d2);color:#333;text-align:center;left:23px;width:26px;">9</div>
<div class="abs c2" style="left:49px;top:686px;width:30px;border-right-color:#aaa;padding-left:0px;">3155</div>
<div class="abs c2" style="left:79px;top:686px;width:148px;border-right-color:#aaa;padding-left:4px;padding-right:4px;"><div style="overflow:hidden;height:24px;">Универсальная организация</div></div>
<div class="abs c2" style="left:227px;top:686px;width:148px;border-right-color:#aaa;padding-left:4px;padding-right:4px;"><div style="overflow:hidden;height:24px;">Основной склад</div></div>
<div class="abs c2" style="left:375px;top:686px;width:148px;border-right-color:#aaa;padding-left:4px;padding-right:4px;"><div style="overflow:hidden;height:24px;">Клиент скидка</div></div>
<div class="abs c2" style="left:523px;top:686px;width:445px;border-right-color:#aaa;padding-left:4px;padding-right:4px;"><div style="overflow:hidden;height:24px;">Лагман</div></div>
<div class="abs c2" style="left:968px;top:686px;width:148px;border-right-color:#aaa;padding-left:4px;padding-right:4px;"><div style="overflow:hidden;height:24px;"></div></div>
<div class="abs c2" style="left:1116px;top:686px;width:148px;border-right-color:#aaa;background:#ececee;color:#444;text-align:right;padding-right:19px;line-height:25px;font-size:12px;letter-spacing:0;">2</div>
<div class="abs c2" style="left:1264px;top:686px;width:148px;border-right-color:#aaa;padding-left:4px;padding-right:4px;"><div style="overflow:hidden;height:24px;">шт</div></div>
<div class="abs c2" style="left:1412px;top:686px;width:148px;border-right-color:#aaa;background:#ececee;color:#444;text-align:right;padding-right:19px;line-height:25px;font-size:12px;letter-spacing:0;">425</div>
<div class="abs c2" style="left:1560px;top:686px;width:148px;border-right-color:#aaa;background:#ececee;color:#444;text-align:right;padding-right:19px;line-height:25px;font-size:12px;letter-spacing:0;">1</div>
<div class="abs c2" style="left:1708px;top:686px;width:152px;border-right-color:#aaa;background:#ececee;color:#444;text-align:right;padding-right:19px;line-height:25px;font-size:12px;letter-spacing:0;">850</div>
<div class="abs" style="left:23px;top:711px;width:1837px;height:25px;background:#fbfdfe;border-bottom:1px solid #aaa;border-top:1px solid #fff;"></div>
<div class="abs c2" style="left:24px;top:711px;width:25px;border-right-color:#aaa;background:linear-gradient(90deg,#eaeaea,#d2d2d2);color:#333;text-align:center;left:23px;width:26px;">10</div>
<div class="abs c2" style="left:49px;top:711px;width:30px;border-right-color:#aaa;padding-left:0px;">3156</div>
<div class="abs c2" style="left:79px;top:711px;width:148px;border-right-color:#aaa;padding-left:4px;padding-right:4px;"><div style="overflow:hidden;height:24px;">Универсальная организация</div></div>
<div class="abs c2" style="left:227px;top:711px;width:148px;border-right-color:#aaa;padding-left:4px;padding-right:4px;"><div style="overflow:hidden;height:24px;">Основной склад</div></div>
<div class="abs c2" style="left:375px;top:711px;width:148px;border-right-color:#aaa;padding-left:4px;padding-right:4px;"><div style="overflow:hidden;height:24px;">Клиент скидка</div></div>
<div class="abs c2" style="left:523px;top:711px;width:445px;border-right-color:#aaa;padding-left:4px;padding-right:4px;"><div style="overflow:hidden;height:24px;">Лагман</div></div>
<div class="abs c2" style="left:968px;top:711px;width:148px;border-right-color:#aaa;padding-left:4px;padding-right:4px;"><div style="overflow:hidden;height:24px;"></div></div>
<div class="abs c2" style="left:1116px;top:711px;width:148px;border-right-color:#aaa;background:#f1f4f5;color:#444;text-align:right;padding-right:19px;line-height:25px;font-size:12px;letter-spacing:0;">7</div>
<div class="abs c2" style="left:1264px;top:711px;width:148px;border-right-color:#aaa;padding-left:4px;padding-right:4px;"><div style="overflow:hidden;height:24px;">шт</div></div>
<div class="abs c2" style="left:1412px;top:711px;width:148px;border-right-color:#aaa;background:#f1f4f5;color:#444;text-align:right;padding-right:19px;line-height:25px;font-size:12px;letter-spacing:0;">500</div>
<div class="abs c2" style="left:1560px;top:711px;width:148px;border-right-color:#aaa;background:#f1f4f5;color:#444;text-align:right;padding-right:19px;line-height:25px;font-size:12px;letter-spacing:0;">1</div>
<div class="abs c2" style="left:1708px;top:711px;width:152px;border-right-color:#aaa;background:#f1f4f5;color:#444;text-align:right;padding-right:19px;line-height:25px;font-size:12px;letter-spacing:0;">3500</div>
<div class="abs" style="left:1860px;top:485px;width:16px;height:251px;background:#f1f1f1;"></div>
<div class="abs" style="left:1864px;top:491px;width:0;height:0;border-left:4px solid transparent;border-right:4px solid transparent;border-bottom:4px solid #a3a3a3;"></div>
<div class="abs" style="left:1864px;top:727px;width:0;height:0;border-left:4px solid transparent;border-right:4px solid transparent;border-top:4px solid #a3a3a3;"></div>
<div class="abs" style="left:23px;top:736px;width:1853px;height:4px;background:#fff;"></div>
<div class="abs pager" style="left:23px;top:740px;width:1854px;height:26px;"></div>
<svg class="abs" style="left:30px;top:747px;" width="12" height="13" viewBox="0 0 12 13"><g fill="none" stroke="#888" stroke-width="1.1"><path d="M1.6 8.6 A4.3 4.3 0 0 1 4.2 2.6 H6.6"/><path d="M5.2 1 L6.9 2.6 L5.2 4.2"/><path d="M9.2 4.6 A4.3 4.3 0 0 1 6.6 10.6 H4.2"/><path d="M5.6 9 L3.9 10.6 L5.6 12.2"/></g></svg>
<svg class="abs" style="left:846px;top:750px;" width="30" height="8" viewBox="0 0 30 8"><rect x="0" y="1" width="1.2" height="6" fill="#c4c4c4"/><path d="M9 1 V7 L3 4Z" fill="#c4c4c4"/><path d="M22.5 1.2 L18.8 4 L22.5 6.8" fill="none" stroke="#c4c4c4" stroke-width="1.1"/><path d="M29.2 1 V7 L23.6 4Z" fill="#c4c4c4"/></svg>
<div class="abs" style="left:883px;top:745px;width:2px;height:17px;background:#d8d8d8;border-right:1px solid #f4f4f4;"></div>
<div class="abs pg" style="left:887px;top:746px;">Стр.</div>
<div class="abs pinp" style="left:914px;top:744px;width:27px;height:18px;">1</div>
<div class="abs pg" style="left:945px;top:746px;">из 3</div>
<div class="abs" style="left:974px;top:745px;width:2px;height:17px;background:#d8d8d8;border-right:1px solid #f4f4f4;"></div>
<svg class="abs" style="left:982px;top:750px;" width="31" height="8" viewBox="0 0 31 8"><path d="M0.4 1 V7 L6 4Z" fill="#8c8c8c"/><path d="M7 1.2 L10.7 4 L7 6.8" fill="none" stroke="#8c8c8c" stroke-width="1.1"/><path d="M21 1 V7 L27 4Z" fill="#8c8c8c"/><rect x="28.4" y="1" width="1.2" height="6" fill="#8c8c8c"/></svg>
<div class="abs pinp" style="left:1018px;top:744px;width:41px;height:18px;padding-left:4px;">10<span style="position:absolute;left:27px;top:0;font-size:9px;">▼</span></div>
<div class="abs pg" style="left:23px;top:747px;width:1849px;text-align:right;">Просмотр 1 - 10 из 25</div>
<svg class="abs" style="left:52px;top:749px;" width="10" height="10" viewBox="52 749 10 10"><path d="M57 750 V757.8 M53 753.9 H61" stroke="#888" stroke-width="1.9" fill="none"/></svg>
<svg class="abs" style="left:74px;top:748px;" width="11" height="12" viewBox="74 748 11 12"><rect x="77.8" y="749" width="3.4" height="1" fill="#888"/><rect x="75" y="750" width="8.9" height="1.1" fill="#888"/><path d="M76 751.8 H83 V757.8 Q83 759 81.8 759 H77.2 Q76 759 76 757.8Z" fill="#888"/><g fill="#ececec"><rect x="77.3" y="752.6" width="1" height="5.2"/><rect x="79" y="752.6" width="1" height="5.2"/><rect x="80.7" y="752.6" width="1" height="5.2"/></g></svg>
<div class="abs lbl" style="left:37px;top:781px;">Комментарий:</div>
<div class="abs inp" style="left:37px;top:797px;width:1795px;height:34px;line-height:32px;">За смену: с 05.02.2018 13:15</div>
<div class="abs" style="left:1901px;top:75px;width:17px;height:795px;background:#f1f1f1;"></div>
<div class="abs" style="left:1903px;top:92px;width:13px;height:749px;background:#c1c1c1;"></div>
<div class="abs" style="left:1905px;top:82px;width:0;height:0;border-left:4px solid transparent;border-right:4px solid transparent;border-bottom:4px solid #a3a3a3;"></div>
<div class="abs" style="left:1905px;top:860px;width:0;height:0;border-left:4px solid transparent;border-right:4px solid transparent;border-top:4px solid #505050;"></div>
<div class="abs" style="left:1799px;top:753px;width:71px;height:71px;border-radius:50%;background:rgba(0,174,239,.2);"></div>
<div class="abs" style="left:1807px;top:761px;width:55px;height:55px;border-radius:50%;background:#00aeef;"></div>
<svg class="abs" style="left:1822px;top:777px;" width="27" height="24" viewBox="0 0 27 24"><path d="M10.5 9 V15.5 Q10.5 17.5 12.5 17.5 H20.5 L24.5 22.5 V17.5 Q25.5 17.3 25.5 15.5 V9Z" fill="#fff"/><path d="M3.5 1 H18.5 Q21 1 21 3.5 V11 Q21 13.5 18.5 13.5 H10.5 L5.5 18 V13.5 H3.5 Q1 13.5 1 11 V3.5 Q1 1 3.5 1Z" fill="#fff" stroke="#00aeef" stroke-width="1.6"/></svg>
<div class="abs" style="left:1748px;top:844px;width:164px;height:20px;background:#9b9b9b;border-radius:3px;"></div>
<div class="abs" style="left:1755px;top:848px;font-size:11px;line-height:14px;color:#fff;white-space:nowrap;letter-spacing:-0.45px;transform:scaleX(0.95);transform-origin:0 0;text-shadow:0 0 0.6px #fff;">SCREENSHOTER</div>
<div class="abs" style="left:1838px;top:846px;font-size:14px;line-height:18px;color:#fff;white-space:nowrap;">@</div>
<div class="abs" style="left:1855px;top:846px;font-size:14px;line-height:16px;color:#fff;white-space:nowrap;letter-spacing:1.2px;text-shadow:0 0 0.6px #fff;">mail.ru</div>
</body>
</html>
